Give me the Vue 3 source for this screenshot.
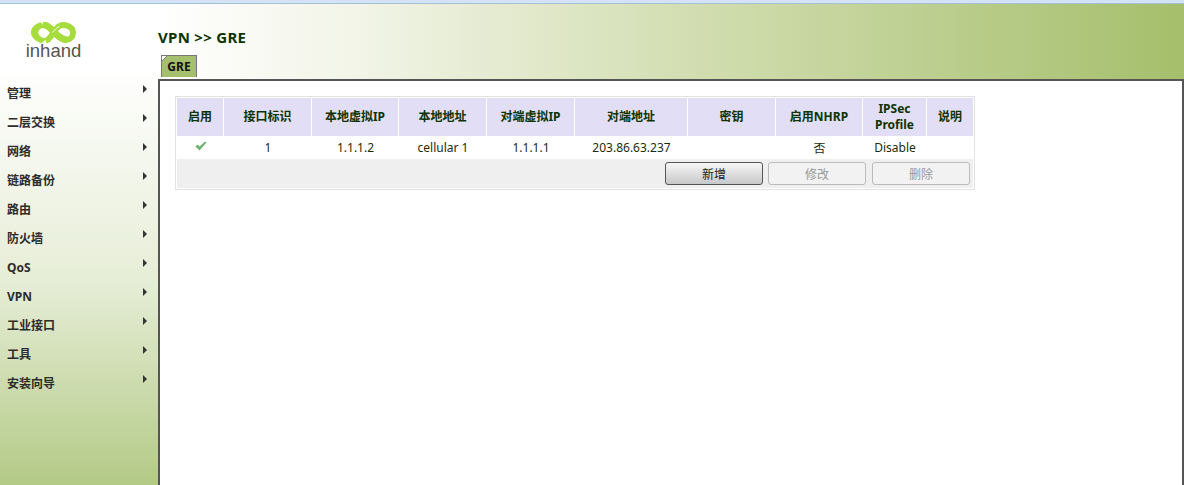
<template>
  <div class="page">
    <div class="topline"></div>
    <div class="layout">
      <aside class="side">
        <div class="logo">
          <svg width="45" height="22" viewBox="0 0 46 22">
            <path d="M10 0C3 2 0 6 0 10.500C0 15 4 19.500 11 21.500L16 16.500C10 16 7.500 13.500 7.500 10.500C7.500 7.500 10 6 14 5Z" fill="#a6dc3c" />
            <path d="M12 2.500C20 3 23 11 29 15C32 17 34 18 37 18" fill="none" stroke="#a6dc3c" stroke-width="7" />
            <path d="M15 19C21 17 23 8 28 4.500C31 2.500 34 2.500 37 3.500C41.500 5 43 8 43 10.500C43 15 40 18 36 18" fill="none" stroke="#a6dc3c" stroke-width="6" />
            <path d="M22 10.500C24 8 26 6 29 4" fill="none" stroke="#fff" stroke-width="1" />
          </svg>
          <span class="logo-text">inhand</span>
        </div>
        <ul class="menu">
          <li v-for="m in menus" :key="m">
            <span>{{ m }}</span>
            <i class="arrow"></i>
          </li>
        </ul>
      </aside>
      <div class="content">
        <header class="head">
          <h1>VPN &gt;&gt; GRE</h1>
          <div class="tab">GRE</div>
        </header>
        <main class="panel">
          <table class="grid">
            <colgroup>
              <col v-for="(w, i) in widths" :key="i" :style="{ width: w + 'px' }" />
            </colgroup>
            <thead>
              <tr>
                <th v-for="c in columns" :key="c">{{ c }}</th>
              </tr>
            </thead>
            <tbody>
              <tr>
                <td>
                  <svg class="check" width="12" height="10" viewBox="0 0 12 10">
                    <path d="M0.500 5.500 2.500 3.500 4.500 5.500 10 0.500 11.500 1.500 4.500 9.500Z" fill="#6fb26f" />
                  </svg>
                </td>
                <td>1</td>
                <td>1.1.1.2</td>
                <td>cellular 1</td>
                <td>1.1.1.1</td>
                <td>203.86.63.237</td>
                <td></td>
                <td>否</td>
                <td>Disable</td>
                <td></td>
              </tr>
              <tr class="actions">
                <td colspan="10">
                  <div class="btns">
                    <button class="btn on">新增</button>
                    <button class="btn" disabled>修改</button>
                    <button class="btn" disabled>删除</button>
                  </div>
                </td>
              </tr>
            </tbody>
          </table>
        </main>
      </div>
    </div>
  </div>
</template>

<script setup>
const menus = ['管理', '二层交换', '网络', '链路备份', '路由', '防火墙', 'QoS', 'VPN', '工业接口', '工具', '安装向导']
const columns = ['启用', '接口标识', '本地虚拟IP', '本地地址', '对端虚拟IP', '对端地址', '密钥', '启用NHRP', 'IPSec Profile', '说明']
const widths = [47, 88, 87, 88, 88, 113, 88, 87, 64, 46]
</script>

<style>
html, body {
  margin: 0;
  height: 100%;
  overflow: hidden;
  background: #fff;
}
</style>

<style scoped>
.page {
  width: 1184px;
  height: 485px;
  display: flex;
  flex-direction: column;
  font-family: "Noto Sans", "Noto Sans CJK SC", sans-serif;
  font-size: 12px;
  color: #1c2d0c;
}

.topline {
  height: 3px;
  background: #d3e2f5;
  border-bottom: 1px solid #a9bfd6;
}

.layout {
  flex: 1;
  display: flex;
  min-height: 0;
}

.side {
  width: 158px;
  flex-shrink: 0;
  background: linear-gradient(to bottom, #fff 0, #fff 60px, #e6edd6 280px, #b3ca86 100%);
}

.logo {
  height: 76px;
  display: flex;
  flex-direction: column;
  align-items: center;
  padding: 18px 0 0 0;
  box-sizing: border-box;
  width: 107px;
}

.logo svg {
  flex-shrink: 0;
}

.logo-text {
  font-family: "Liberation Sans", sans-serif;
  font-size: 18.500px;
  line-height: 20px;
  color: #5a5452;
  margin-top: -3px;
}

.menu {
  list-style: none;
  margin: 0;
  padding: 0;
}

.menu li {
  height: 29px;
  padding: 0 11px 0 7px;
  display: flex;
  justify-content: space-between;
  font-weight: bold;
  line-height: 28px;
  color: #2c2c2c;
}

.arrow {
  width: 0;
  height: 0;
  margin-top: 5px;
  border-left: 4px solid #333;
  border-top: 4px solid transparent;
  border-bottom: 4px solid transparent;
}

.content {
  flex: 1;
  display: flex;
  flex-direction: column;
  min-width: 0;
}

.head {
  height: 75px;
  box-sizing: border-box;
  padding: 23px 0 0 0;
  background: linear-gradient(to right, #fff 0, #f1f4e6 20%, #d4dfb4 50%, #a5bf6c 100%);
}

.head h1 {
  margin: 0;
  height: 28px;
  font-size: 15px;
  line-height: 21px;
  letter-spacing: 0.3px;
  color: #0d3300;
}

.tab {
  width: 36px;
  height: 22px;
  margin-left: 3px;
  box-sizing: border-box;
  border: 1px solid #777;
  border-bottom: 0;
  background: linear-gradient(135deg, #fff 0, #fff 3px, #777 3px, #777 4px, #a5bf6c 4px);
  font-weight: bold;
  line-height: 22px;
  text-align: center;
  color: #111;
}

.panel {
  flex: 1;
  min-height: 0;
  background: #fff;
  border-top: 2px solid #555;
  border-left: 2px solid #555;
  border-right: 2px solid #555;
  padding: 15px 0 0 15px;
}

.grid {
  width: 800px;
  table-layout: fixed;
  border-collapse: separate;
  border-spacing: 0;
  border: 1px solid #e2e2e2;
  padding: 1px;
  text-align: center;
}

.grid th {
  height: 38px;
  padding: 0 4px;
  box-sizing: border-box;
  background: #e2def5;
  border-right: 1px solid #fff;
  line-height: 16px;
  color: #0d3300;
}

.grid th:last-child {
  border-right: 0;
}

.grid td {
  height: 23px;
  padding: 0;
  color: #1c2d0c;
}

.check {
  display: block;
  margin: 0 auto 3px;
}

.actions td {
  height: 29px;
  background: #efefef;
}

.btns {
  display: flex;
  justify-content: flex-end;
  gap: 5px;
  padding-right: 3px;
}

.btn {
  width: 98px;
  height: 23px;
  padding: 0;
  border: 1px solid #bbb;
  border-radius: 3px;
  background: #f2f2f2;
  font: inherit;
  color: #999;
}

.btn:last-child {
  margin-left: 1px;
}

.btn.on {
  border-color: #555;
  color: #222;
  background: linear-gradient(to bottom, #f6f6f6, #c8c8c8);
}
</style>
